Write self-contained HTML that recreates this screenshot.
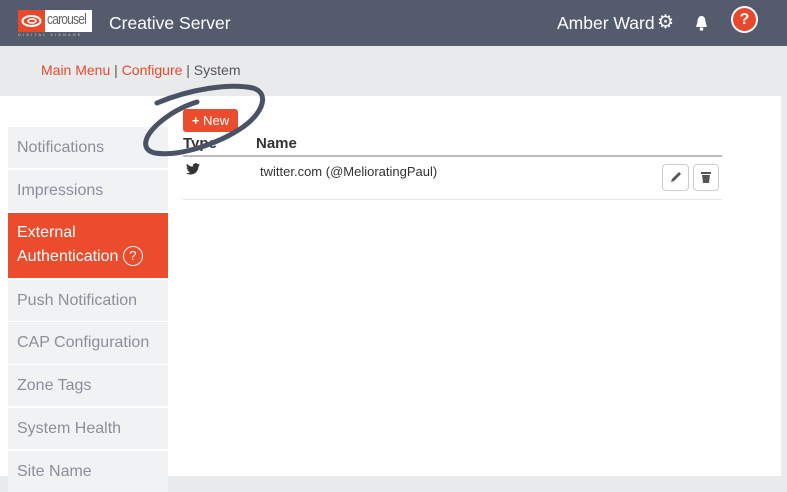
<!DOCTYPE html>
<html><head><style>
*{margin:0;padding:0;box-sizing:border-box}
body{width:787px;height:471px;overflow:hidden;background:#e9eaec;font-family:"Liberation Sans",sans-serif;position:relative}
.hdr{position:absolute;left:0;top:0;width:787px;height:46px;background:#545b6d;color:#fff}
.crumb{position:absolute;left:41px;top:62px;font-size:14px;color:#555}
.crumb a{color:#e8492d}
.panel{position:absolute;left:0;top:96px;width:781px;height:380px;background:#fff}
.side{position:absolute;left:8px;width:160px;background:#f1f2f4;color:#8a8f9b;font-size:16px;padding-left:9px;overflow:hidden}
.act{background:#ec4c2e;color:#fff}
</style></head><body>
<div class="hdr">
 <div style="position:absolute;left:18px;top:10px;width:74px;height:22px;background:#fff"></div>
 <div style="position:absolute;left:18px;top:10px;width:27px;height:22px;background:#e8492d"></div>
 <svg style="position:absolute;left:20px;top:13px" width="23" height="16"><ellipse cx="11.5" cy="8" rx="9" ry="5" fill="none" stroke="#fff" stroke-width="2"/><ellipse cx="12" cy="8" rx="4" ry="2" fill="none" stroke="#fff" stroke-width="1.5"/></svg>
 <div style="position:absolute;left:47px;top:11px;font-size:15px;color:#666;letter-spacing:-1px;transform:scaleX(.8);transform-origin:left">carousel</div>
 <div style="position:absolute;left:18px;top:32px;font-size:4px;color:#ccc;letter-spacing:2px">DIGITAL SIGNAGE</div>
 <div style="position:absolute;left:109px;top:13px;font-size:17.5px">Creative Server</div>
 <div style="position:absolute;left:557px;top:13px;font-size:17.5px">Amber Ward</div>
 <div style="position:absolute;left:657px;top:11px;font-size:19px">⚙</div>
 <svg style="position:absolute;left:694px;top:15px" width="15" height="16"><path d="M7.5 1C4.5 1 3.5 4 3.5 7L2 12H13L11.5 7C11.5 4 10.5 1 7.5 1Z" fill="#fff"/><circle cx="7.5" cy="14" r="1.8" fill="#fff"/></svg>
 <div style="position:absolute;left:731px;top:6px;width:27px;height:27px;border-radius:50%;background:#e8492d;border:2px solid #fff;color:#fff;font-size:16px;text-align:center;line-height:23px;font-weight:bold">?</div>
</div>
<div class="crumb"><a>Main Menu</a> | <a>Configure</a> | System</div>
<div class="panel"></div>
<div class="side" style="top:127px;height:41px;line-height:41px">Notifications</div>
<div class="side" style="top:170px;height:41px;line-height:41px">Impressions</div>
<div class="side act" style="top:213px;height:65px;padding-top:8px;line-height:24px">External<br>Authentication <span style="display:inline-block;width:20px;height:20px;border:1px solid #fff;border-radius:50%;font-size:13px;line-height:18px;text-align:center;vertical-align:1px">?</span></div>
<div class="side" style="top:280px;height:41px;line-height:41px">Push Notification</div>
<div class="side" style="top:322px;height:42px;line-height:42px">CAP Configuration</div>
<div class="side" style="top:365px;height:41px;line-height:41px">Zone Tags</div>
<div class="side" style="top:408px;height:41px;line-height:41px">System Health</div>
<div class="side" style="top:451px;height:41px;line-height:41px">Site Name</div>
<div style="position:absolute;left:183px;top:109px;width:55px;height:23px;background:#ec4c2e;border-radius:3px;color:#fff;font-size:13px;line-height:23px;text-align:center"><b>+</b> New</div>
<div style="position:absolute;left:183px;top:135px;font-size:15px;font-weight:bold;color:#333">Type</div>
<div style="position:absolute;left:256px;top:135px;font-size:15px;font-weight:bold;color:#333">Name</div>
<div style="position:absolute;left:183px;top:155px;width:539px;height:2px;background:#bbb"></div>
<svg style="position:absolute;left:186px;top:163px" width="14" height="12" viewBox="0 0 24 20"><path d="M24 2.4a10 10 0 0 1-2.8.8 5 5 0 0 0 2.2-2.7 10 10 0 0 1-3.1 1.2A4.9 4.9 0 0 0 11.9 6 14 14 0 0 1 1.7.9a4.9 4.9 0 0 0 1.5 6.6A4.9 4.9 0 0 1 1 6.9a4.9 4.9 0 0 0 3.9 4.8 5 5 0 0 1-2.2.1 4.9 4.9 0 0 0 4.6 3.4A9.9 9.9 0 0 1 0 17.3 14 14 0 0 0 7.5 19.5c9.1 0 14-7.5 14-14v-.6A10 10 0 0 0 24 2.4z" fill="#333"/></svg>
<div style="position:absolute;left:260px;top:164px;font-size:13px;color:#333">twitter.com (@MelioratingPaul)</div>
<div style="position:absolute;left:662px;top:164px;width:27px;height:27px;border:1px solid #ccc;border-radius:4px"><svg width="25" height="25"><path d="M8 17l1-3 7-7 2 2-7 7z" fill="#555"/></svg></div>
<div style="position:absolute;left:693px;top:164px;width:26px;height:27px;border:1px solid #ccc;border-radius:4px"><svg width="24" height="25"><rect x="7" y="7" width="10" height="2" fill="#555"/><path d="M8 10h8l-1 8h-6z" fill="#555"/></svg></div>
<div style="position:absolute;left:183px;top:199px;width:539px;height:1px;background:#e5e5e5"></div>
<svg style="position:absolute;left:135px;top:75px" width="140" height="90"><path d="M22 28C55 14 95 8 118 13C135 18 128 38 108 52C85 68 45 82 20 78C6 75 8 62 24 48C38 36 52 30 62 27" fill="none" stroke="#4a5366" stroke-width="5" stroke-linecap="round"/></svg>
</body></html>
